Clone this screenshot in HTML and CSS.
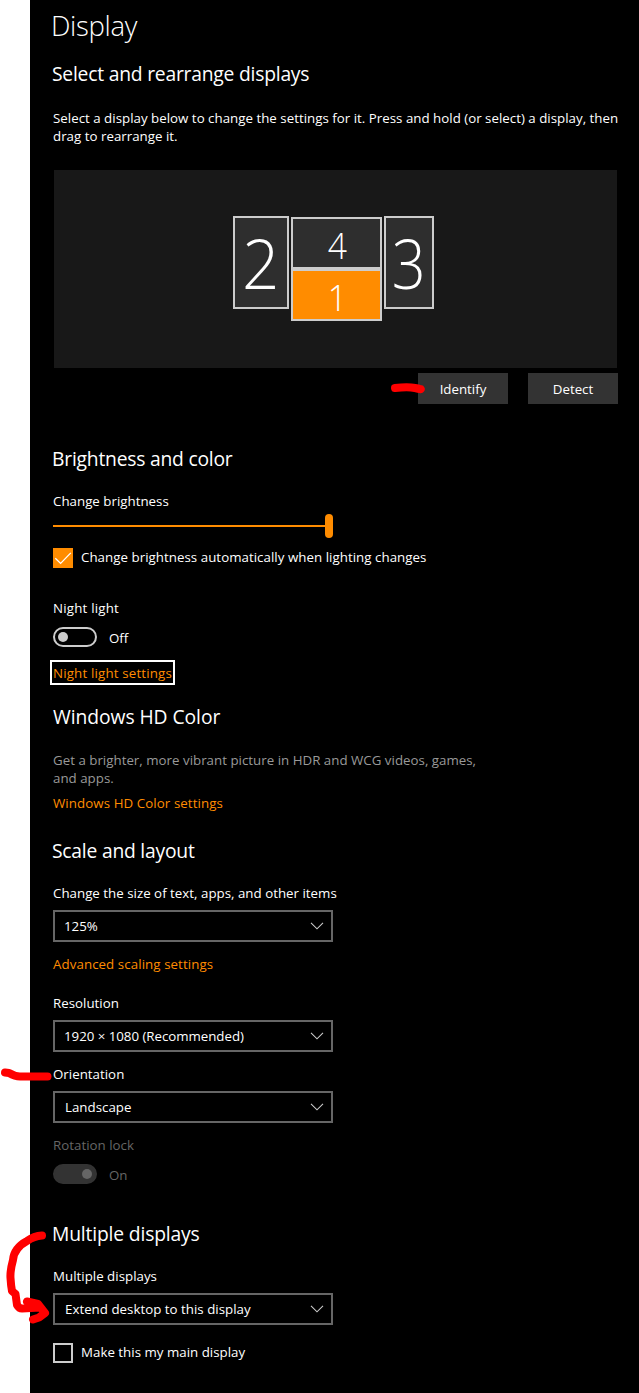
FILE: index.html
```html
<!DOCTYPE html>
<html lang="en">
<head>
<meta charset="utf-8">
<title>Display</title>
<link rel="stylesheet" href="styles.css">
</head>
<body>
<main class="panel">
  <h1 class="title">Display</h1>

  <section class="section arrange">
    <h2 class="heading">Select and rearrange displays</h2>
    <p class="intro">Select a display below to change the settings for it. Press and hold (or select) a display, then<br>drag to rearrange it.</p>
    <div class="canvas">
      <div class="monitor m2"><span class="num big two">2</span></div>
      <div class="monitor m4"><span class="num">4</span></div>
      <div class="monitor m1"><span class="num">1</span></div>
      <div class="monitor m3"><span class="num big">3</span></div>
    </div>
    <div class="buttons">
      <button class="btn">Identify</button>
      <button class="btn">Detect</button>
    </div>
  </section>

  <section class="section brightness">
    <h2 class="heading">Brightness and color</h2>
    <div class="label">Change brightness</div>
    <div class="slider"><div class="track"></div><div class="thumb"></div></div>
    <div class="check-row auto">
      <span class="check checked"><svg width="20" height="20" viewBox="0 0 20 20"><path d="M2.3 10.2 7.6 15.4 17.8 4.9"/></svg></span>
      <span class="check-label">Change brightness automatically when lighting changes</span>
    </div>
    <div class="label night">Night light</div>
    <div class="toggle-row"><span class="toggle"><i class="knob"></i></span><span class="state">Off</span></div>
    <a class="link focused">Night light settings</a>
  </section>

  <section class="section hd">
    <h2 class="heading">Windows HD Color</h2>
    <p class="hint">Get a brighter, more vibrant picture in HDR and WCG videos, games,<br>and apps.</p>
    <a class="link hd-link">Windows HD Color settings</a>
  </section>

  <section class="section scale">
    <h2 class="heading">Scale and layout</h2>
    <div class="label">Change the size of text, apps, and other items</div>
    <div class="select numeric"><span>125%</span><svg class="chevron" width="14" height="8" viewBox="0 0 14 8"><path d="M1 .8 7 6.8 13 .8"/></svg></div>
    <a class="link adv">Advanced scaling settings</a>
    <div class="label res">Resolution</div>
    <div class="select numeric"><span>1920 × 1080 (Recommended)</span><svg class="chevron" width="14" height="8" viewBox="0 0 14 8"><path d="M1 .8 7 6.8 13 .8"/></svg></div>
    <div class="label next">Orientation</div>
    <div class="select"><span>Landscape</span><svg class="chevron" width="14" height="8" viewBox="0 0 14 8"><path d="M1 .8 7 6.8 13 .8"/></svg></div>
    <div class="label next disabled">Rotation lock</div>
    <div class="toggle-row disabled"><span class="toggle on"><i class="knob"></i></span><span class="state">On</span></div>
  </section>

  <section class="section multiple">
    <h2 class="heading">Multiple displays</h2>
    <div class="label">Multiple displays</div>
    <div class="select"><span>Extend desktop to this display</span><svg class="chevron" width="14" height="8" viewBox="0 0 14 8"><path d="M1 .8 7 6.8 13 .8"/></svg></div>
    <div class="check-row main-display">
      <span class="check"></span>
      <span class="check-label">Make this my main display</span>
    </div>
  </section>
</main>
<svg class="marks" width="639" height="1393" viewBox="0 0 639 1393">
  <path d="M395 388Q408 386.500 415 388T420.500 389"/>
  <path d="M5 1072.500 9 1073Q15 1076.500 20 1076.500H47.500"/>
  <path d="M42 1235.500Q34 1236 27 1241 14 1248 13 1260 10 1271 10.500 1278 11 1286 12 1291L15.500 1294 17 1305Q19 1308.500 22 1308.500L40 1307.500 27 1301.500 38 1304 45 1313 39 1317.500 33 1319.500"/>
</svg>
</body>
</html>
```

FILE: styles.css
```css
* { box-sizing: border-box; margin: 0; padding: 0; }

body {
  position: relative;
  width: 639px;
  height: 1393px;
  overflow: hidden;
  background: #fff;
  font: 400 13.3px/18px "Open Sans", "Noto Sans", sans-serif;
  letter-spacing: .015px;
  color: #fff;
}

.panel {
  height: 1393px;
  margin-left: 30px;
  padding: 7px 21px 0 23px;
  background: #000;
}

.title { margin-left: -2px; font-size: 27.5px; line-height: 37px; font-weight: 300; letter-spacing: -.3px; }
.heading { margin-left: -1px; font-size: 19.3px; line-height: 28px; font-weight: 400; letter-spacing: -.22px; white-space: nowrap; }
.hd .heading { margin-left: 0; letter-spacing: -.07px; }
.multiple .heading { letter-spacing: -.16px; }
.section { display: flex; flex-direction: column; align-items: flex-start; }
.arrange { margin-top: 16px; }
.brightness { margin-top: 41px; }
.hd { margin-top: 18px; }
.scale { margin-top: 25px; }
.multiple { margin-top: 36px; }

.intro { margin-top: 21px; white-space: nowrap; }

.canvas {
  position: relative;
  width: 563px;
  height: 198px;
  margin: 25px 0 0 1px;
  background: #181818;
}
.monitor {
  position: absolute;
  display: flex;
  align-items: center;
  justify-content: center;
  border: 2px solid #ccc;
  background: #2e2e2e;
}
.m2 { left: 179px; top: 46px; width: 56px; height: 93px; }
.m4 { left: 237px; top: 47px; width: 91px; height: 52px; }
.m1 { left: 237px; top: 99px; width: 91px; height: 52px; background: #ff8c00; }
.m3 { left: 330px; top: 46px; width: 50px; height: 93px; }
.num { font-size: 36.5px; line-height: 48px; font-weight: 300; transform: translate(1px, 2px) scaleX(.92); }
.num.big { font-size: 69px; line-height: 90px; transform: translateY(-1px) scaleX(.86); }
.num.two { transform: translateY(-1px) scaleX(.95); }

.buttons { display: flex; gap: 20px; align-self: flex-end; margin-top: 5px; }
.btn {
  width: 90px;
  height: 31px;
  border: 0;
  background: #333;
  color: #fff;
  font: inherit;
}

.label { margin-top: 19px; white-space: nowrap; }
.slider { display: flex; align-items: center; width: 280px; height: 24px; margin-top: 4px; }
.track { flex: 1; height: 2px; background: #ff8c00; }
.thumb { width: 8px; height: 24px; border-radius: 4px; background: #ff8c00; }

.check-row { display: flex; align-items: center; gap: 8px; height: 20px; white-space: nowrap; }
.check-label { margin-top: -2px; }
.auto { margin-top: 10px; letter-spacing: .04px; }
.main-display { margin-top: 18px; }
.check { width: 20px; height: 20px; border: 2px solid #ccc; }
.checked { border: 0; background: #ff8c00; }
.check svg { display: block; fill: none; stroke: #fff; stroke-width: 1.3; }

.night { margin-top: 31px; letter-spacing: .2px; }
.toggle-row { display: flex; gap: 12px; height: 20px; margin-top: 10px; }
.toggle {
  display: flex;
  align-items: center;
  width: 44px;
  height: 20px;
  padding: 0 3px;
  border: 2px solid #ccc;
  border-radius: 10px;
}
.knob { width: 10px; height: 10px; border-radius: 5px; background: #ccc; }
.toggle.on { justify-content: flex-end; border-color: #333; background: #333; }
.toggle.on .knob { background: #666; }
.state { padding-top: 2px; }
.disabled { color: #666; }

.link { color: #ff8c00; letter-spacing: .08px; white-space: nowrap; }
.focused {
  width: 125px;
  height: 25px;
  margin: 13px 0 0 -3px;
  padding: 2px 1px;
  border: 2px solid #fff;
  letter-spacing: .17px;
}
.hint { margin-top: 20px; color: #999; white-space: nowrap; }
.hd-link { margin-top: 7px; }
.adv { margin-top: 13px; }

.select {
  display: flex;
  align-items: center;
  justify-content: space-between;
  width: 280px;
  height: 32px;
  margin-top: 8px;
  padding: 0 7px 0 10px;
  border: 2px solid #666;
  white-space: nowrap;
}
.select.numeric { padding-left: 9px; letter-spacing: -.03px; }
.chevron { fill: none; stroke: #ccc; stroke-width: 1.1; }
.res { margin-top: 21px; }
.next { margin-top: 13px; }

.marks {
  position: absolute;
  left: 0;
  top: 0;
  pointer-events: none;
  fill: none;
  stroke: #f00;
  stroke-width: 8;
  stroke-linecap: round;
  stroke-linejoin: round;
}
```
